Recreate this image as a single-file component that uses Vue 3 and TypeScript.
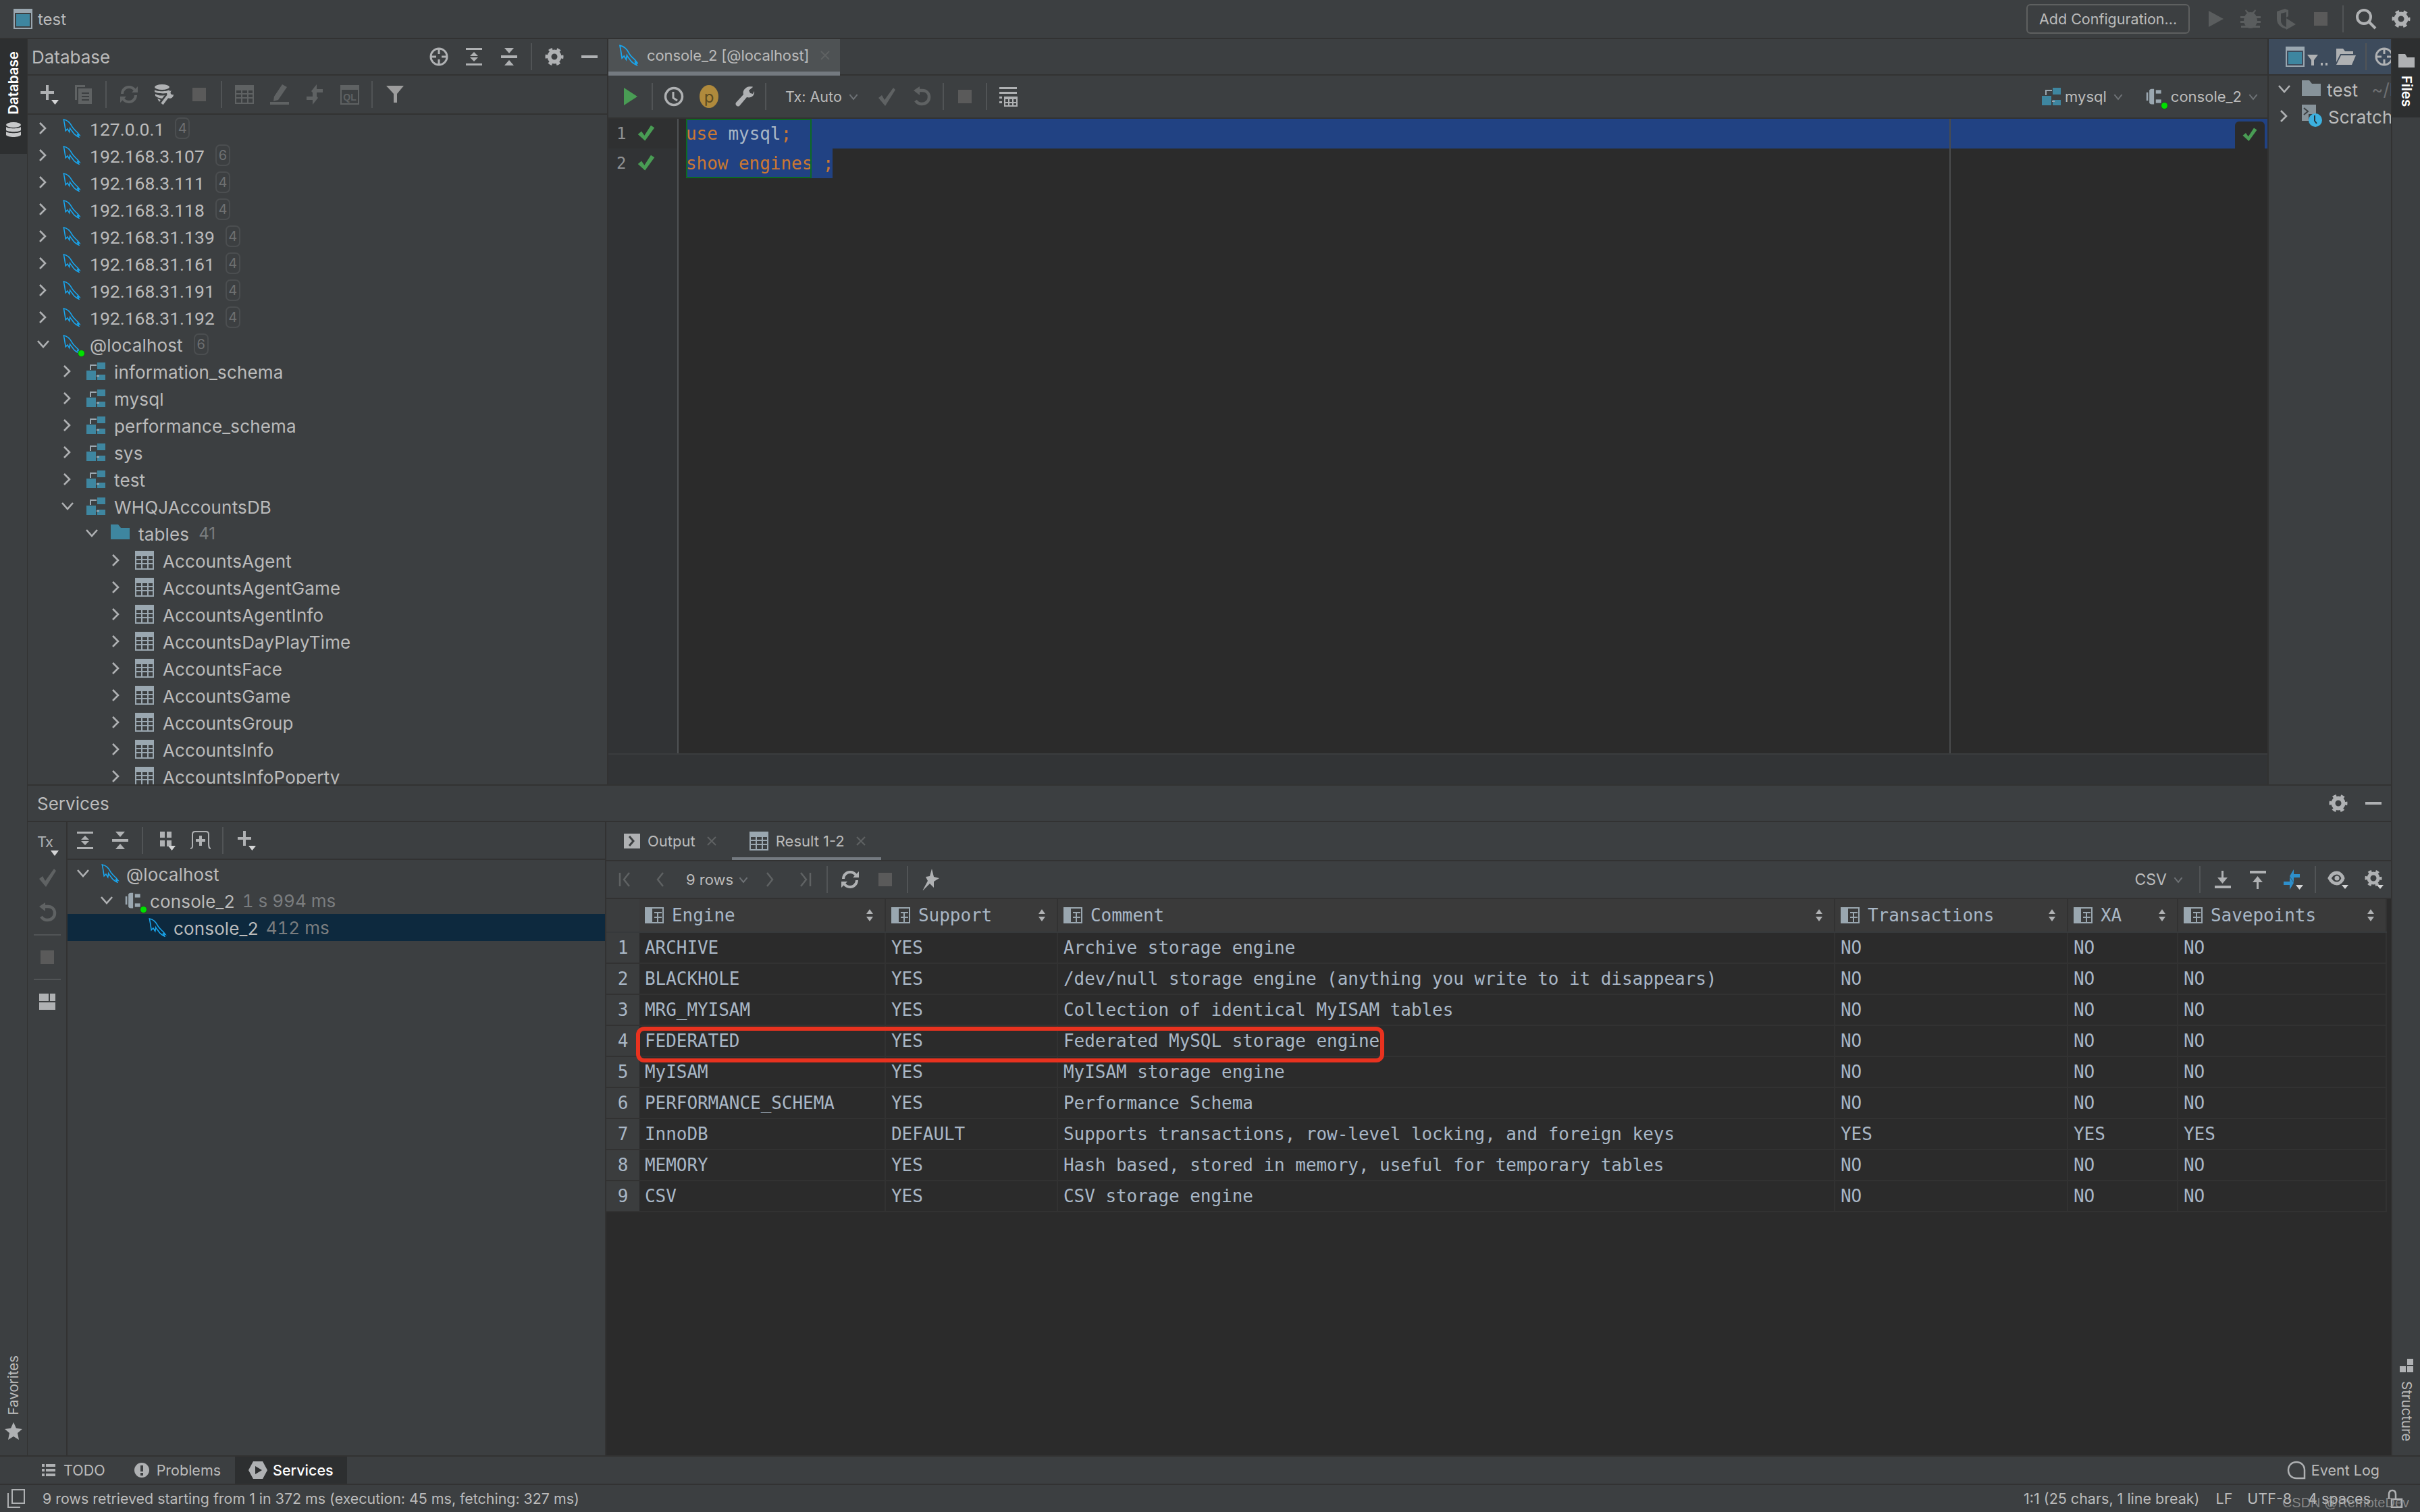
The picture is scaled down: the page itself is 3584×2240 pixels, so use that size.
<script setup lang="ts">
interface TreeRow { level: number; arrow: 'r' | 'd' | ''; icon: string; text: string; badge?: string; count?: string; live?: boolean }
const hosts = ['127.0.0.1|4', '192.168.3.107|6', '192.168.3.111|4', '192.168.3.118|4', '192.168.31.139|4', '192.168.31.161|4', '192.168.31.191|4', '192.168.31.192|4']
const dbRows: TreeRow[] = [
  ...hosts.map(h => ({ level: 0, arrow: 'r' as const, icon: 'dolphin', text: h.split('|')[0], badge: h.split('|')[1] })),
  { level: 0, arrow: 'd', icon: 'dolphin', text: '@localhost', badge: '6', live: true },
  ...['information_schema', 'mysql', 'performance_schema', 'sys', 'test'].map(t => ({ level: 1, arrow: 'r' as const, icon: 'schema', text: t })),
  { level: 1, arrow: 'd', icon: 'schema', text: 'WHQJAccountsDB' },
  { level: 2, arrow: 'd', icon: 'folder', text: 'tables', count: '41' },
  ...['AccountsAgent', 'AccountsAgentGame', 'AccountsAgentInfo', 'AccountsDayPlayTime', 'AccountsFace', 'AccountsGame', 'AccountsGroup', 'AccountsInfo', 'AccountsInfoPoperty'].map(t => ({ level: 3, arrow: 'r' as const, icon: 'table', text: t })),
]
const svcRows = [
  { level: 0, arrow: 'd', icon: 'dolphin', text: '@localhost', time: '', live: false, sel: false },
  { level: 1, arrow: 'd', icon: 'console', text: 'console_2', time: '1 s 994 ms', live: true, sel: false },
  { level: 2, arrow: '', icon: 'dolphin', text: 'console_2', time: '412 ms', live: false, sel: true },
]
const dbHeadTools = ['crosshair', 'expand', 'collapse', '|', 'gear', 'minimize']
const dbTools = ['plus', 'copy', '|', 'refreshOff', 'dbtool', 'stop', '|', 'tableOff', 'edit', 'compareOff', 'ql', '|', 'filter']
const runTools = ['runOff', 'bug', 'coverage', 'stop', '|', 'search', 'gear']
const svcTools = ['expand', 'collapse', '|', 'group', 'addTab', '|', 'plus']
const sideTools = ['tx', 'checkOff', 'undoOff', '|', 'stop', '|', 'layout']
const exportTools = ['|', 'download', 'upload', 'compareBlue', '|', 'eye', 'gearMenu']
const isAddress = (t: string) => /^\d/.test(t)

const columns = ['Engine', 'Support', 'Comment', 'Transactions', 'XA', 'Savepoints']
const engines = [
  ['ARCHIVE', 'YES', 'Archive storage engine', 'NO', 'NO', 'NO'],
  ['BLACKHOLE', 'YES', '/dev/null storage engine (anything you write to it disappears)', 'NO', 'NO', 'NO'],
  ['MRG_MYISAM', 'YES', 'Collection of identical MyISAM tables', 'NO', 'NO', 'NO'],
  ['FEDERATED', 'YES', 'Federated MySQL storage engine', 'NO', 'NO', 'NO'],
  ['MyISAM', 'YES', 'MyISAM storage engine', 'NO', 'NO', 'NO'],
  ['PERFORMANCE_SCHEMA', 'YES', 'Performance Schema', 'NO', 'NO', 'NO'],
  ['InnoDB', 'DEFAULT', 'Supports transactions, row-level locking, and foreign keys', 'YES', 'YES', 'YES'],
  ['MEMORY', 'YES', 'Hash based, stored in memory, useful for temporary tables', 'NO', 'NO', 'NO'],
  ['CSV', 'YES', 'CSV storage engine', 'NO', 'NO', 'NO'],
]
</script>

<template>
  <div class="ide">
    <svg class="defs" width="0" height="0">
      <symbol id="dolphin" viewBox="3 2 27 30"><path fill="none" stroke="#19a6ee" stroke-width="1.700" d="M4 3C10 4 14 8 17 14C19 18 23 21 26 24L29 28L26 27L28 31C24 29 21 27 19 24C17 21 15 19 14 17L13 23L10 18L7 21C6 14 5 8 4 3Z"/></symbol>
      <symbol id="schema" viewBox="0 0 28 28"><g fill="#3e86a0"><rect x="16" y="1" width="12" height="10"/><rect x="0" y="13" width="14" height="14"/><rect x="16" y="19" width="12" height="8"/></g><path fill="none" stroke="#9aa7b0" stroke-width="2" d="M6 12V5H15M15 21H19"/></symbol>
      <symbol id="folder" viewBox="0 0 28 28"><path fill="#3e86a0" d="M0 1H11L15 6H28V23H0Z"/></symbol>
      <symbol id="folderGray" viewBox="0 0 28 28"><path fill="#87939a" d="M0 1H11L15 6H28V24H0Z"/></symbol>
      <symbol id="table" viewBox="0 0 28 28"><rect x="0" y="0" width="28" height="28" fill="#9aa7b0"/><g fill="#3c3f41"><rect x="2" y="8" width="7" height="4"/><rect x="11" y="8" width="7" height="4"/><rect x="20" y="8" width="6" height="4"/><rect x="2" y="14" width="7" height="4"/><rect x="11" y="14" width="7" height="4"/><rect x="20" y="14" width="6" height="4"/><rect x="2" y="20" width="7" height="6"/><rect x="11" y="20" width="7" height="6"/><rect x="20" y="20" width="6" height="6"/></g></symbol>
      <symbol id="column" viewBox="0 0 28 28"><rect x="0" y="2" width="11" height="24" fill="#9aa7b0"/><path fill="none" stroke="#9aa7b0" stroke-width="2" d="M11 3H27V25H11M14 10H25M14 17H25M19 10V25"/></symbol>
      <symbol id="console" viewBox="0 0 32 32"><g fill="#9aa7b0"><path d="M2 9H5V23H2Z"/><path d="M7 6C7 4 9 3 11 3H15V29H11C9 29 7 28 7 26Z"/><rect x="18" y="5" width="9" height="6"/><rect x="18" y="21" width="9" height="6"/></g></symbol>
      <symbol id="crosshair" viewBox="0 0 32 32"><g fill="none" stroke="#afb1b3" stroke-width="3"><circle cx="16" cy="16" r="12"/><path d="M16 4V12M16 20V28M4 16H12M20 16H28"/></g></symbol>
      <symbol id="expand" viewBox="0 0 32 32"><g fill="#afb1b3"><rect x="4" y="3" width="24" height="3"/><rect x="4" y="26" width="24" height="3"/><path d="M16 9L22 15H10ZM16 23L10 17H22Z"/></g></symbol>
      <symbol id="collapse" viewBox="0 0 32 32"><g fill="#afb1b3"><rect x="4" y="14" width="24" height="4"/><path d="M9 3H23L16 11ZM16 21L23 29H9Z"/></g></symbol>
      <symbol id="gear" viewBox="0 0 32 32"><g fill="none" stroke="#afb1b3"><circle cx="16" cy="16" r="7.5" stroke-width="6"/><circle cx="16" cy="16" r="11.5" stroke-width="4" stroke-dasharray="5.5 6.54" stroke-dashoffset="2.7"/></g></symbol>
      <symbol id="gearMenu" viewBox="0 0 32 32"><g fill="none" stroke="#afb1b3"><circle cx="16" cy="14" r="7" stroke-width="5"/><circle cx="16" cy="14" r="10.5" stroke-width="4" stroke-dasharray="5 6" stroke-dashoffset="2.5"/></g><path fill="#d4d5d6" d="M21 24H31L26 30Z"/></symbol>
      <symbol id="minimize" viewBox="0 0 32 32"><rect x="4" y="14" width="24" height="4" fill="#afb1b3"/></symbol>
      <symbol id="plus" viewBox="0 0 32 32"><path fill="#afb1b3" d="M9 3H13V12H21V16H13V25H9V16H1V12H9Z" transform="translate(3 -1)"/><path fill="#d4d5d6" d="M20 24H31L25.500 31Z"/></symbol>
      <symbol id="copy" viewBox="0 0 32 32"><g fill="#5f6263"><path d="M3 2H18V5H6V24H3Z"/><path d="M8 7H28V30H8Z"/></g><g fill="#3c3f41"><rect x="13" y="13" width="11" height="2"/><rect x="13" y="18" width="11" height="2"/><rect x="13" y="23" width="11" height="2"/></g></symbol>
      <symbol id="refreshOff" viewBox="0 0 32 32"><g fill="none" stroke="#5f6263" stroke-width="4"><path d="M6 15C6 9 11 5 16 5C20 5 23 7 25 10"/><path d="M26 17C26 23 21 27 16 27C12 27 9 25 7 22"/></g><path fill="#5f6263" d="M29 4V13H20ZM3 28V19H12Z"/></symbol>
      <symbol id="refresh" viewBox="0 0 32 32"><g fill="none" stroke="#afb1b3" stroke-width="4"><path d="M6 15C6 9 11 5 16 5C20 5 23 7 25 10"/><path d="M26 17C26 23 21 27 16 27C12 27 9 25 7 22"/></g><path fill="#afb1b3" d="M29 4V13H20ZM3 28V19H12Z"/></symbol>
      <symbol id="dbtool" viewBox="0 0 32 32"><g fill="#afb1b3"><ellipse cx="13" cy="5" rx="11" ry="4"/><path d="M2 9C5 12 20 12 24 9V13C20 15 6 15 2 12ZM3 15C7 18 14 18 17 17L13 22C8 21 5 20 3 18ZM6 22L11 24L9 27Z"/></g><path fill="none" stroke="#afb1b3" stroke-width="4" d="M13 30L22 18"/><path fill="#afb1b3" d="M20 13L27 10C24 14 26 17 30 16C30 21 25 23 21 21Z"/></symbol>
      <symbol id="stop" viewBox="0 0 32 32"><rect x="6" y="6" width="20" height="20" fill="#5a5a5a"/></symbol>
      <symbol id="tableOff" viewBox="0 0 32 32"><rect x="2" y="2" width="28" height="28" fill="#5f6263"/><g fill="#3c3f41"><rect x="4" y="10" width="7" height="4"/><rect x="13" y="10" width="7" height="4"/><rect x="22" y="10" width="6" height="4"/><rect x="4" y="16" width="7" height="4"/><rect x="13" y="16" width="7" height="4"/><rect x="22" y="16" width="6" height="4"/><rect x="4" y="22" width="7" height="6"/><rect x="13" y="22" width="7" height="6"/><rect x="22" y="22" width="6" height="6"/></g></symbol>
      <symbol id="edit" viewBox="0 0 32 32"><g fill="#5f6263"><path d="M20 1L27 5L14 24L7 26L8 19Z"/><rect x="2" y="27" width="28" height="4"/></g></symbol>
      <symbol id="compareOff" viewBox="0 0 32 32"><g fill="#5f6263"><path d="M19 1V8H28V13H19V20L11 11ZM13 12L21 21L13 31V24H4V19H13Z"/></g></symbol>
      <symbol id="compareBlue" viewBox="0 0 32 32"><g fill="#2e8fcb"><path d="M17 1V8H26V13H17V20L11 11ZM11 12L17 21L11 31V24H2V19H11Z"/></g><path fill="#d4d5d6" d="M20 24H31L25.500 31Z"/></symbol>
      <symbol id="filter" viewBox="0 0 32 32"><path fill="#9d9d9d" d="M3 3H29L19 15V28H14V15Z"/></symbol>
      <symbol id="runOff" viewBox="0 0 32 32"><path fill="#5a5d5e" d="M6 4L28 16L6 28Z"/></symbol>
      <symbol id="run" viewBox="0 0 32 32"><path fill="#499c54" d="M6 3L26 16L6 29Z"/></symbol>
      <symbol id="bug" viewBox="0 0 32 32"><g fill="#5a5d5e"><ellipse cx="16" cy="18" rx="10" ry="12"/><path d="M9 2L14 7H18L23 2L24 4L20 9H12L8 4Z"/><rect x="1" y="12" width="30" height="3"/><rect x="1" y="19" width="30" height="3"/><rect x="2" y="26" width="28" height="3"/></g></symbol>
      <symbol id="coverage" viewBox="0 0 32 32"><path fill="#5a5d5e" d="M3 5L15 1L20 3V12L17 14V6L9 8V19C9 23 13 27 17 28V31C9 29 3 24 3 16Z"/><path fill="#5a5d5e" d="M17 15L31 24L17 32Z"/></symbol>
      <symbol id="search" viewBox="0 0 32 32"><g fill="none" stroke="#afb1b3" stroke-width="4"><circle cx="13" cy="13" r="10"/><path d="M20 20L30 30"/></g></symbol>
      <symbol id="clock" viewBox="0 0 32 32"><g fill="none" stroke="#afb1b3" stroke-width="3.500"><circle cx="16" cy="16" r="12.500"/><path d="M15 9V18L21 22" stroke-width="3"/></g></symbol>
      <symbol id="wrench" viewBox="0 0 32 32"><path fill="#afb1b3" d="M19 3C24 0 30 2 29 2L23 7L25 11L29 12L31 8C32 14 27 19 20 17L9 30C6 32 2 28 4 25L15 13C14 9 15 6 19 3Z"/></symbol>
      <symbol id="checkOff" viewBox="0 0 32 32"><path fill="#5f6263" d="M4 18L9 14L13 21L26 3L29 6L14 30Z"/></symbol>
      <symbol id="undoOff" viewBox="0 0 32 32"><path fill="none" stroke="#5f6263" stroke-width="4.500" d="M11 7H17C23 7 27 11 27 17C27 23 22 27 16 27C12 27 9 25 7 22"/><path fill="#5f6263" d="M4 7L13 1V14Z"/></symbol>
      <symbol id="tableMenu" viewBox="0 0 32 32"><g fill="#afb1b3"><rect x="3" y="2" width="26" height="3"/><rect x="3" y="9" width="26" height="3"/><rect x="3" y="16" width="4" height="3"/><rect x="3" y="23" width="4" height="3"/><path d="M10 16H30V31H10Z"/></g><g fill="#3c3f41"><rect x="12" y="20" width="4" height="4"/><rect x="18" y="20" width="4" height="4"/><rect x="24" y="20" width="4" height="4"/><rect x="12" y="26" width="4" height="3"/><rect x="18" y="26" width="4" height="3"/><rect x="24" y="26" width="4" height="3"/></g></symbol>
      <symbol id="greenCheck" viewBox="0 0 32 32"><path fill="#499c54" d="M2 17L8 12L13 19L24 2L30 6L14 28Z"/></symbol>
      <symbol id="group" viewBox="0 0 32 32"><g fill="#afb1b3"><rect x="8" y="3" width="7" height="9"/><rect x="18" y="3" width="7" height="9"/><rect x="8" y="16" width="7" height="9"/><rect x="18" y="16" width="7" height="9"/></g><path fill="#d4d5d6" d="M20 24H31L25.500 31Z"/></symbol>
      <symbol id="addTab" viewBox="0 0 32 32"><path fill="none" stroke="#afb1b3" stroke-width="2" d="M1 28C5 28 4 24 4 20V7C4 4 6 3 8 3H24C26 3 28 4 28 7V20C28 24 28 28 31 28"/><path fill="#afb1b3" d="M14 9H18V14H23V18H18V24H14V18H9V14H14Z"/></symbol>
      <symbol id="triangle" viewBox="0 0 12 8"><path fill="#d4d5d6" d="M0 0H12L6 8Z"/></symbol>
      <symbol id="layout" viewBox="0 0 32 32"><g fill="#afb1b3"><rect x="4" y="4" width="14" height="11"/><rect x="20" y="4" width="8" height="11"/><rect x="4" y="17" width="24" height="11"/></g></symbol>
      <symbol id="download" viewBox="0 0 32 32"><g fill="#afb1b3"><rect x="4" y="25" width="24" height="4"/><rect x="14" y="3" width="3" height="12"/><path d="M8 13H23L15.500 22Z"/></g></symbol>
      <symbol id="upload" viewBox="0 0 32 32"><g fill="#afb1b3"><rect x="4" y="3" width="24" height="4"/><rect x="14" y="18" width="3" height="12"/><path d="M8 20H23L15.500 11Z"/></g></symbol>
      <symbol id="eye" viewBox="0 0 32 32"><path fill="none" stroke="#afb1b3" stroke-width="5" d="M3 14C6 8 10 6 14 6C18 6 22 10 23 14C22 18 18 22 14 22C10 22 6 20 3 14Z"/><circle cx="14" cy="14" r="3.500" fill="#afb1b3"/><path fill="#d4d5d6" d="M21 24H31L26 30Z"/></symbol>
      <symbol id="first" viewBox="0 0 32 32"><path fill="none" stroke="#5f6263" stroke-width="2.500" d="M8 6V26M22 6L14 16L22 26"/></symbol>
      <symbol id="prev" viewBox="0 0 32 32"><path fill="none" stroke="#5f6263" stroke-width="2.500" d="M20 6L12 16L20 26"/></symbol>
      <symbol id="next" viewBox="0 0 32 32"><path fill="none" stroke="#5f6263" stroke-width="2.500" d="M12 6L20 16L12 26"/></symbol>
      <symbol id="last" viewBox="0 0 32 32"><path fill="none" stroke="#5f6263" stroke-width="2.500" d="M24 6V26M10 6L18 16L10 26"/></symbol>
      <symbol id="pin" viewBox="0 0 32 32"><path fill="#afb1b3" d="M20 1L23 13L31 15L23 20L23 29L17 23L6 34L14 19L11 13L17 12Z" transform="translate(-2 -1)"/></symbol>
      <symbol id="output" viewBox="0 0 24 32"><rect x="0" y="5" width="24" height="22" fill="#afb1b3"/><path fill="none" stroke="#3c3f41" stroke-width="3" d="M8 9L14 16L8 23"/></symbol>
      <symbol id="close" viewBox="0 0 16 16"><path fill="none" stroke="#5f6263" stroke-width="2" d="M2 2L14 14M14 2L2 14"/></symbol>
      <symbol id="sort" viewBox="0 0 12 18"><path fill="#afb1b3" d="M6 0L11 7H1ZM6 18L1 11H11Z"/></symbol>
      <symbol id="chevR" viewBox="0 0 32 32"><path fill="none" stroke="#afb1b3" stroke-width="2.600" d="M11 8L19 16L11 24"/></symbol>
      <symbol id="chevD" viewBox="0 0 32 32"><path fill="none" stroke="#afb1b3" stroke-width="2.600" d="M8 11L16 20L24 11"/></symbol>
      <symbol id="chevS" viewBox="0 0 32 32"><path fill="none" stroke="#6d7175" stroke-width="3.500" d="M6 11L16 23L26 11"/></symbol>
      <symbol id="frame" viewBox="0 0 28 32"><rect x="1" y="2" width="26" height="28" fill="none" stroke="#9aa7b0" stroke-width="2"/><rect x="1" y="2" width="26" height="5" fill="#9aa7b0"/><rect x="4" y="9" width="20" height="18" fill="#3e86a0"/></symbol>
      <symbol id="starFav" viewBox="0 0 26 26"><path fill="#afb1b3" d="M13 0L17 9L26 10L19 16L21 26L13 21L5 26L7 16L0 10L9 9Z"/></symbol>
      <symbol id="dbStack" viewBox="0 0 24 24"><g fill="#c8c9ca"><ellipse cx="12" cy="5" rx="11" ry="4"/><path d="M1 8C4 11 20 11 23 8V13C20 16 4 16 1 13ZM1 15C4 18 20 18 23 15V20C20 24 4 24 1 20Z"/></g></symbol>
      <symbol id="filesIc" viewBox="0 0 24 20"><path fill="#afb1b3" d="M0 0H10L13 5H24V20H0Z"/></symbol>
      <symbol id="structIc" viewBox="0 0 20 20"><g fill="#afb1b3"><rect x="11" y="0" width="9" height="9"/><rect x="0" y="11" width="9" height="9"/><rect x="11" y="11" width="9" height="9"/></g></symbol>
      <symbol id="todo" viewBox="0 0 24 24"><g fill="#afb1b3"><rect x="2" y="3" width="4" height="4"/><rect x="8" y="3" width="14" height="4"/><rect x="2" y="10" width="4" height="4"/><rect x="8" y="10" width="14" height="4"/><rect x="2" y="17" width="4" height="4"/><rect x="8" y="17" width="14" height="4"/></g></symbol>
      <symbol id="problems" viewBox="0 0 24 24"><circle cx="12" cy="12" r="11" fill="#afb1b3"/><rect x="10" y="5" width="4" height="9" fill="#3c3f41"/><rect x="10" y="16" width="4" height="4" fill="#3c3f41"/></symbol>
      <symbol id="services" viewBox="0 0 28 28"><path fill="#afb1b3" d="M7 1H21L28 14L21 27H7L0 14Z"/><path fill="#2d2f30" d="M10 8L20 14L10 20Z"/></symbol>
      <symbol id="eventLog" viewBox="0 0 28 28"><path fill="none" stroke="#afb1b3" stroke-width="2.500" d="M14 2C7 2 2 7 2 14C2 21 7 26 14 26H26V14C26 7 21 2 14 2Z"/></symbol>
      <symbol id="panels" viewBox="0 0 26 28"><path fill="none" stroke="#afb1b3" stroke-width="2" d="M7 1H25V21H7ZM1 6V27H19"/></symbol>
      <symbol id="lock" viewBox="0 0 28 28"><path fill="none" stroke="#afb1b3" stroke-width="2.500" d="M5 15V8C5 4 7 2 10 2C13 2 15 4 15 8V15"/><rect x="9" y="15" width="15" height="12" fill="none" stroke="#afb1b3" stroke-width="2.500"/></symbol>
      <symbol id="scratch" viewBox="0 0 30 34"><path fill="#87939a" d="M0 0H21V14H10V24H0Z"/><path fill="none" stroke="#3c3f41" stroke-width="2" d="M3 5L9 10L3 15"/><circle cx="20" cy="23" r="10" fill="#3cb1e0"/><path fill="none" stroke="#26343d" stroke-width="2" d="M19 16V24L22 28"/></symbol>
      <symbol id="filterDots" viewBox="0 0 30 20"><path fill="#afb1b3" d="M0 2H16L10 10V18H6V10Z"/><rect x="20" y="14" width="3" height="4" fill="#afb1b3"/><rect x="27" y="14" width="3" height="4" fill="#afb1b3"/></symbol>
      <symbol id="folderOpen" viewBox="0 0 30 28"><path fill="#afb1b3" d="M1 2H11L14 6H26V10H7L1 22ZM8 12H30L24 26H1Z"/></symbol>
    </svg>

    <header class="topbar">
      <svg class="title-ic"><use href="#frame" /></svg>
      <span class="title">test</span>
      <button class="add-config">Add Configuration...</button>
      <template v-for="(t, i) in runTools" :key="i">
        <i v-if="t === '|'" class="sep" />
        <span v-else class="b"><svg class="i"><use :href="'#' + t" /></svg></span>
      </template>
    </header>

    <div class="main">
      <aside class="stripe left">
        <div class="stripe-btn active">
          <span class="vtext up bold">Database</span>
          <svg class="db-ic"><use href="#dbStack" /></svg>
        </div>
        <div class="stripe-btn fav">
          <span class="vtext up">Favorites</span>
          <svg class="star-ic"><use href="#starFav" /></svg>
        </div>
      </aside>

      <div class="center">
        <div class="upper">
          <section class="db">
            <div class="head">
              <span class="head-title">Database</span>
              <span class="push" />
              <template v-for="(t, i) in dbHeadTools" :key="i">
                <i v-if="t === '|'" class="sep" />
                <span v-else class="b"><svg class="i"><use :href="'#' + t" /></svg></span>
              </template>
            </div>
            <div class="tools db-tools">
              <template v-for="(t, i) in dbTools" :key="i">
                <i v-if="t === '|'" class="sep" />
                <span v-else-if="t === 'ql'" class="b">
                  <svg class="i" viewBox="0 0 32 32"><path fill="none" stroke="#5f6263" stroke-width="2" d="M3 3H29V30H3Z" /><rect x="3" y="3" width="26" height="6" fill="#5f6263" /><text x="16" y="25" text-anchor="middle" font-family="Liberation Sans" font-weight="700" font-size="14" fill="#5f6263">QL</text></svg>
                </span>
                <span v-else class="b"><svg class="i"><use :href="'#' + t" /></svg></span>
              </template>
            </div>
            <div class="tree">
              <div v-for="r in dbRows" :key="r.text + r.level" class="row" :style="{ paddingLeft: 7 + r.level * 36 + 'px' }">
                <svg class="chev"><use :href="r.arrow === 'd' ? '#chevD' : '#chevR'" /></svg>
                <span class="ti-wrap">
                  <svg class="ti"><use :href="'#' + r.icon" /></svg>
                  <i v-if="r.live" class="dot" />
                </span>
                <span class="label" :class="{ address: isAddress(r.text) }">{{ r.text }}</span>
                <span v-if="r.badge" class="badge">{{ r.badge }}</span>
                <span v-if="r.count" class="count">{{ r.count }}</span>
              </div>
            </div>
          </section>

          <section class="editor">
            <div class="tabbar">
              <div class="tab">
                <svg class="tab-ic"><use href="#dolphin" /></svg>
                <span class="tab-label">console_2 [@localhost]</span>
                <svg class="x"><use href="#close" /></svg>
              </div>
            </div>
            <div class="tools ed-tools">
              <span class="b"><svg class="i"><use href="#run" /></svg></span>
              <i class="sep s12" />
              <span class="b"><svg class="i"><use href="#clock" /></svg></span>
              <span class="b"><span class="p-ic">p</span></span>
              <span class="b"><svg class="i"><use href="#wrench" /></svg></span>
              <i class="sep s12" />
              <span class="tx">Tx: Auto</span>
              <svg class="sm-chev tx-chev"><use href="#chevS" /></svg>
              <span class="b"><svg class="i"><use href="#checkOff" /></svg></span>
              <span class="b"><svg class="i"><use href="#undoOff" /></svg></span>
              <i class="sep s12" />
              <span class="b"><svg class="i"><use href="#stop" /></svg></span>
              <i class="sep s12" />
              <span class="b"><svg class="i"><use href="#tableMenu" /></svg></span>
              <span class="push" />
              <svg class="ti"><use href="#schema" /></svg>
              <span class="ctx">mysql</span>
              <svg class="sm-chev"><use href="#chevS" /></svg>
              <span class="ti-wrap ctx-c">
                <svg class="ti"><use href="#console" /></svg>
                <i class="dot" />
              </span>
              <span class="ctx">console_2</span>
              <svg class="sm-chev last"><use href="#chevS" /></svg>
            </div>
            <div class="code-area">
              <div class="gutter">
                <div class="gline cur"><span class="ln">1</span><svg class="gcheck"><use href="#greenCheck" /></svg></div>
                <div class="gline"><span class="ln">2</span><svg class="gcheck"><use href="#greenCheck" /></svg></div>
              </div>
              <div class="code">
                <div class="line sel-full"><span class="kw">use</span> <span class="id">mysql</span><span class="kw">;</span></div>
                <div class="line sel-part"><span class="kw">show engines ;</span></div>
                <i class="stmt-box" />
                <i class="margin-line" />
                <span class="status-check"><svg class="sc"><use href="#greenCheck" /></svg></span>
              </div>
            </div>
            <div class="ed-foot" />
          </section>

          <section class="project">
            <div class="proj-head">
              <svg class="proj-frame"><use href="#frame" /></svg>
              <svg class="proj-dots"><use href="#filterDots" /></svg>
              <svg class="proj-open"><use href="#folderOpen" /></svg>
              <i class="sep proj-sep" />
              <svg class="i"><use href="#crosshair" /></svg>
            </div>
            <div class="proj-row">
              <svg class="proj-chev"><use href="#chevD" /></svg>
              <svg class="ti"><use href="#folderGray" /></svg>
              <span class="label proj-label">test</span>
              <span class="path">~/l</span>
            </div>
            <div class="proj-row">
              <svg class="proj-chev"><use href="#chevR" /></svg>
              <svg class="ti scr"><use href="#scratch" /></svg>
              <span class="label proj-label">Scratch</span>
            </div>
          </section>
        </div>

        <section class="services">
          <div class="head">
            <span class="head-title svc">Services</span>
            <span class="push" />
            <span class="b"><svg class="i"><use href="#gear" /></svg></span>
            <span class="b"><svg class="i"><use href="#minimize" /></svg></span>
          </div>
          <div class="svc-body">
            <div class="side-tools">
              <template v-for="(t, i) in sideTools" :key="i">
                <i v-if="t === '|'" class="hsep" />
                <span v-else-if="t === 'tx'" class="b tall tx-btn">
                  <span class="tx-label">Tx</span>
                  <svg class="tri"><use href="#triangle" /></svg>
                </span>
                <span v-else class="b tall"><svg class="i"><use :href="'#' + t" /></svg></span>
              </template>
            </div>
            <div class="svc-tree">
              <div class="tools svc-tools">
                <template v-for="(t, i) in svcTools" :key="i">
                  <i v-if="t === '|'" class="sep" />
                  <span v-else class="b"><svg class="i"><use :href="'#' + t" /></svg></span>
                </template>
              </div>
              <div v-for="(r, i) in svcRows" :key="i" class="row svc-row" :class="{ selected: r.sel }" :style="{ paddingLeft: 7 + r.level * 35 + 'px' }">
                <svg class="chev" :class="{ hidden: !r.arrow }"><use href="#chevD" /></svg>
                <span class="ti-wrap">
                  <svg class="ti"><use :href="'#' + r.icon" /></svg>
                  <i v-if="r.live" class="dot" />
                </span>
                <span class="label">{{ r.text }}</span>
                <span v-if="r.time" class="time">{{ r.time }}</span>
              </div>
            </div>
            <div class="result">
              <div class="rtabs">
                <div class="rtab">
                  <svg class="out-ic"><use href="#output" /></svg>
                  <span class="rtab-label">Output</span>
                  <svg class="x"><use href="#close" /></svg>
                </div>
                <div class="rtab on">
                  <svg class="ti"><use href="#table" /></svg>
                  <span class="rtab-label">Result 1-2</span>
                  <svg class="x"><use href="#close" /></svg>
                </div>
              </div>
              <div class="tools res-tools">
                <span class="b"><svg class="i"><use href="#first" /></svg></span>
                <span class="b"><svg class="i"><use href="#prev" /></svg></span>
                <span class="rows-count">9 rows</span>
                <svg class="sm-chev rc"><use href="#chevS" /></svg>
                <span class="b"><svg class="i"><use href="#next" /></svg></span>
                <span class="b"><svg class="i"><use href="#last" /></svg></span>
                <i class="sep" />
                <span class="b"><svg class="i"><use href="#refresh" /></svg></span>
                <span class="b"><svg class="i"><use href="#stop" /></svg></span>
                <i class="sep" />
                <span class="b"><svg class="i"><use href="#pin" /></svg></span>
                <span class="push" />
                <span class="csv">CSV</span>
                <svg class="sm-chev csvc"><use href="#chevS" /></svg>
                <template v-for="(t, i) in exportTools" :key="i">
                  <i v-if="t === '|'" class="sep" />
                  <span v-else class="b"><svg class="i"><use :href="'#' + t" /></svg></span>
                </template>
              </div>
              <div class="grid-wrap">
                <div class="grid-row grid-head">
                  <div class="rn" />
                  <div v-for="c in columns" :key="c" class="hcell">
                    <svg class="col-ic"><use href="#column" /></svg>
                    <span class="hlabel">{{ c }}</span>
                    <svg class="sort"><use href="#sort" /></svg>
                  </div>
                </div>
                <div v-for="(e, i) in engines" :key="e[0]" class="grid-row">
                  <div class="rn num">{{ i + 1 }}</div>
                  <div v-for="(v, j) in e" :key="j" class="cell">{{ v }}</div>
                </div>
                <i class="annotation" />
              </div>
            </div>
          </div>
        </section>
      </div>

      <aside class="stripe right">
        <div class="stripe-btn active files">
          <svg class="files-ic"><use href="#filesIc" /></svg>
          <span class="vtext bold">Files</span>
        </div>
        <div class="stripe-btn struct">
          <svg class="struct-ic"><use href="#structIc" /></svg>
          <span class="vtext">Structure</span>
        </div>
      </aside>
    </div>

    <div class="toolbar-bottom">
      <div class="tw first"><svg class="tw-ic"><use href="#todo" /></svg>TODO</div>
      <div class="tw"><svg class="tw-ic"><use href="#problems" /></svg>Problems</div>
      <div class="tw active"><svg class="tw-ic big"><use href="#services" /></svg>Services</div>
      <span class="push" />
      <div class="tw elog"><svg class="tw-ic big"><use href="#eventLog" /></svg>Event Log</div>
    </div>

    <footer class="status">
      <svg class="panels"><use href="#panels" /></svg>
      <span class="msg">9 rows retrieved starting from 1 in 372 ms (execution: 45 ms, fetching: 327 ms)</span>
      <span class="push" />
      <span class="st s1">1:1 (25 chars, 1 line break)</span>
      <span class="st s2">LF</span>
      <span class="st s3">UTF-8</span>
      <span class="st s4">4 spaces</span>
      <svg class="lock"><use href="#lock" /></svg>
      <span class="watermark">CSDN @RemoteDev</span>
    </footer>
  </div>
</template>

<style scoped>
.ide {
  position: relative;
  width: 3584px;
  height: 2240px;
  overflow: hidden;
  background: #3c3f41;
  color: #bbbbbb;
  font-family: Inter, "Liberation Sans", sans-serif;
  font-size: 26px;
  display: flex;
  flex-direction: column;
}
.defs { position: absolute; }
svg { display: block; flex: none; }
.push { flex: 1; }
.b { width: 52px; height: 52px; flex: none; display: flex; align-items: center; justify-content: center; }
.i { width: 32px; height: 32px; }
.sep { width: 15px; height: 40px; flex: none; display: block; position: relative; }
.sep::before { content: ""; position: absolute; left: 6px; top: 0; bottom: 0; width: 2px; background: #515456; }
.s12 { width: 12px; }
.s12::before { left: 5px; }

.topbar { height: 56px; flex: none; display: flex; align-items: center; padding: 0 2px 0 20px; border-bottom: 2px solid #323232; box-sizing: content-box; }
.title-ic { width: 28px; height: 32px; }
.title { margin-left: 8px; font-size: 24px; flex: 1; }
.add-config { width: 242px; height: 44px; margin-right: 12px; background: transparent; border: 2px solid #5e6060; border-radius: 6px; color: #bbbbbb; font: inherit; font-size: 21.5px; padding: 0; }

.main { height: 2098px; flex: none; display: flex; border-bottom: 2px solid #323232; }
.stripe { width: 40px; flex: none; display: flex; flex-direction: column; justify-content: space-between; }
.stripe.left { border-right: 1px solid #323232; }
.stripe.right { width: 41px; }
.stripe-btn { display: flex; flex-direction: column; align-items: center; }
.stripe-btn.active { background: #2d2f30; color: #ffffff; }
.left .stripe-btn.active { height: 170px; padding-top: 18px; box-sizing: border-box; }
.vtext { writing-mode: vertical-rl; font-size: 20.5px; line-height: 1; white-space: nowrap; }
.vtext.up { transform: rotate(180deg); }
.vtext.bold { font-weight: 600; }
.db-ic { width: 24px; height: 24px; margin-top: 10px; }
.fav { padding-bottom: 23px; }
.star-ic { width: 26px; height: 26px; margin-top: 10px; }
.files { height: 116px; padding-top: 22px; box-sizing: border-box; }
.files-ic { width: 24px; height: 20px; margin-bottom: 12px; }
.struct { padding-bottom: 20px; }
.struct-ic { width: 20px; height: 20px; margin-bottom: 13px; }

.center { flex: 1; min-width: 0; display: flex; flex-direction: column; border-right: 2px solid #323232; }
.upper { height: 1104px; flex: none; display: flex; border-bottom: 2px solid #323232; }

.db { width: 858px; flex: none; border-right: 2px solid #323232; display: flex; flex-direction: column; overflow: hidden; }
.head { height: 52px; flex: none; display: flex; align-items: center; border-bottom: 2px solid #323232; }
.head-title { margin-left: 6px; font-size: 26px; }
.head-title.svc { margin-left: 14px; }
.tools { flex: none; display: flex; align-items: center; border-bottom: 2px solid #323232; }
.db-tools { height: 56px; padding-left: 5px; }
.tree { flex: 1; overflow: hidden; }
.row { height: 40px; display: flex; align-items: center; white-space: nowrap; }
.chev { width: 32px; height: 32px; }
.chev.hidden { visibility: hidden; }
.ti-wrap { position: relative; margin: 0 13px 0 12px; flex: none; }
.ti { width: 28px; height: 28px; }
.dot { position: absolute; right: -5px; bottom: -4px; width: 9px; height: 9px; border-radius: 50%; background: #00e000; box-shadow: 0 0 0 1px #2a4a2a; }
.label { font-size: 26px; color: #bbbbbb; letter-spacing: 0.15px; position: relative; top: 1px; }
.label.address { font-family: Roboto, "Liberation Sans", sans-serif; font-size: 26.5px; letter-spacing: 0; }
.badge { margin-left: 16px; width: 22px; height: 32px; box-sizing: border-box; border: 2px solid #4b4e50; border-radius: 7px; color: #6e7072; font-size: 20px; display: flex; align-items: center; justify-content: center; }
.count { margin-left: 14px; color: #7a7d7f; font-size: 24px; }

.editor { width: 2457px; flex: none; display: flex; flex-direction: column; border-right: 2px solid #323232; }
.tabbar { height: 52px; flex: none; border-bottom: 2px solid #323232; position: relative; }
.tab { position: absolute; left: 0; top: 0; width: 343px; height: 54px; box-sizing: border-box; background: #4e5254; border-bottom: 6px solid #747a80; display: flex; align-items: center; padding-left: 16px; }
.tab-ic { width: 28px; height: 32px; }
.tab-label { margin-left: 13px; font-size: 22px; letter-spacing: -0.1px; }
.x { width: 16px; height: 16px; margin-left: 16px; }
.ed-tools { height: 62px; padding-left: 7px; }
.p-ic { width: 28px; height: 34px; border-radius: 50%; background: #b08a3c; color: #5c4a22; font-size: 24px; display: flex; align-items: center; justify-content: center; }
.tx { margin-left: 23px; font-size: 21.5px; }
.sm-chev { width: 18px; height: 18px; margin-left: 8px; }
.sm-chev.tx-chev { margin-right: 14px; }
.ctx { margin-left: 6px; font-size: 22px; }
.ctx-c { margin: 0 4px 0 31px; }
.sm-chev.last { margin-right: 12px; }
.code-area { height: 940px; flex: none; display: flex; }
.gutter { width: 102px; flex: none; background: #313335; border-right: 2px solid #4f5254; }
.gline { height: 44px; display: flex; align-items: center; padding-left: 12px; }
.gline.cur { background: #2f3031; }
.ln { color: #8f9193; font-family: "DejaVu Sans Mono", monospace; font-size: 24px; width: 26px; }
.gcheck { width: 28px; height: 30px; margin-left: 4px; }
.code { flex: 1; position: relative; background: #2b2b2b; font-family: "DejaVu Sans Mono", "Liberation Mono", monospace; font-size: 26px; letter-spacing: -0.05px; white-space: pre; }
.line { height: 44px; line-height: 44px; margin-left: 11px; }
.sel-full { background: #214283; }
.sel-part { background: #214283; width: 217px; }
.kw { color: #cc7832; }
.id { color: #a9b7c6; }
.stmt-box { position: absolute; left: 11px; top: 0; width: 186px; height: 88px; box-sizing: border-box; border: 2px solid #0d6b22; }
.margin-line { position: absolute; left: 1882px; top: 0; bottom: 0; width: 2px; background: #4a4c4d; }
.status-check { position: absolute; right: 4px; top: 4px; width: 44px; height: 40px; background: #2b2b2b; border-radius: 6px 6px 0 0; display: flex; align-items: center; justify-content: center; }
.sc { width: 24px; height: 24px; }
.ed-foot { flex: 1; background: #323436; border-top: 2px solid #3a3c3e; }

.project { flex: 1; min-width: 0; overflow: hidden; }
.proj-head { height: 52px; background: #3d4b5c; border-bottom: 2px solid #323232; display: flex; align-items: center; padding-left: 25px; }
.proj-frame { width: 28px; height: 32px; }
.proj-dots { width: 30px; height: 20px; margin: 10px 0 0 4px; }
.proj-open { width: 30px; height: 28px; margin-left: 12px; }
.proj-sep { margin-left: 8px; margin-right: 3px; }
.proj-row { height: 40px; display: flex; align-items: center; white-space: nowrap; position: relative; top: 0; }
.proj-chev { width: 32px; height: 32px; margin-left: 7px; }
.proj-row .ti { margin-left: 10px; }
.proj-row .scr { height: 34px; width: 30px; }
.proj-label { margin-left: 9px; }
.path { margin-left: 20px; color: #6e7072; }

.services { flex: 1; min-height: 0; display: flex; flex-direction: column; }
.svc-body { flex: 1; min-height: 0; display: flex; }
.side-tools { width: 57px; flex: none; border-right: 2px solid #323232; padding-top: 4px; display: flex; flex-direction: column; align-items: center; }
.b.tall { width: 100%; }
.tx-btn { position: relative; }
.tx-label { font-size: 22px; color: #afb1b3; letter-spacing: -1px; position: relative; left: -3px; top: -1px; }
.tri { position: absolute; left: 34px; bottom: 6px; width: 12px; height: 8px; }
.hsep { width: 40px; height: 14px; flex: none; position: relative; display: block; }
.hsep::before { content: ""; position: absolute; left: 0; right: 0; top: 6px; height: 2px; background: #515456; }
.svc-tree { width: 796px; flex: none; border-right: 2px solid #323232; }
.svc-tools { height: 54px; }
.svc-row .ti-wrap { margin: 0 10px; }
.svc-row .ti { width: 28px; height: 28px; }
.selected { background: #0d293e; }
.time { margin-left: 11px; color: #7a7d7f; font-size: 26px; font-variant-numeric: tabular-nums; }
.result { flex: 1; min-width: 0; display: flex; flex-direction: column; }
.rtabs { height: 56px; box-sizing: content-box; flex: none; display: flex; border-bottom: 2px solid #323232; }
.rtab { height: 56px; box-sizing: border-box; display: flex; align-items: center; padding-left: 26px; padding-right: 22px; }
.rtab.on { border-bottom: 4px solid #747a80; padding-top: 4px; padding-left: 26px; }
.out-ic { width: 24px; height: 32px; }
.rtab-label { margin-left: 11px; font-size: 22px; }
.rtab .x { margin-left: 16px; }
.res-tools { height: 54px; padding-left: 2px; }
.rows-count { margin-left: 12px; font-size: 22px; }
.sm-chev.rc { margin: 0 4px 0 6px; }
.csv { font-size: 23px; }
.sm-chev.csvc { margin: 0 16px 0 8px; }
.grid-wrap { flex: 1; min-height: 0; background: #2b2b2b; position: relative; }
.grid-row { display: grid; grid-template-columns: 49px 365px 255px 1151px 345px 163px 309px; width: 2637px; height: 46px; box-sizing: border-box; border-bottom: 2px solid #323232; font-family: "DejaVu Sans Mono", "Liberation Mono", monospace; font-size: 26px; letter-spacing: -0.05px; color: #a9b7c6; }
.grid-head { height: 50px; background: #3a3a3a; border-bottom: 2px solid #36393b; }
.rn { background: #3b3d3e; }
.num { text-align: center; line-height: 44px; color: #a9b7c6; }
.hcell, .cell { border-right: 2px solid #323232; white-space: nowrap; overflow: hidden; }
.hcell { display: flex; align-items: center; padding-left: 8px; padding-right: 16px; }
.cell { padding-left: 8px; line-height: 44px; }
.col-ic { width: 28px; height: 28px; }
.hlabel { margin-left: 12px; flex: 1; }
.sort { width: 12px; height: 18px; }
.annotation { position: absolute; left: 44px; top: 189px; width: 1108px; height: 53px; box-sizing: border-box; border: 6px solid #e8321f; border-radius: 12px; }

.toolbar-bottom { height: 40px; flex: none; display: flex; align-items: stretch; border-bottom: 2px solid #323232; box-sizing: content-box; }
.tw { display: flex; align-items: center; font-size: 21.5px; color: #bbbbbb; padding: 0 21px; }
.tw.first { padding-left: 60px; }
.tw.active { background: #2d2f30; color: #ffffff; padding: 0 20px; font-weight: 500; }
.tw-ic { width: 24px; height: 24px; margin-right: 10px; }
.tw-ic.big { width: 28px; height: 28px; margin-right: 8px; }
.elog { padding-right: 60px; }

.status { height: 40px; flex: none; display: flex; align-items: center; position: relative; }
.panels { width: 26px; height: 28px; margin-left: 11px; }
.msg { margin-left: 26px; font-size: 21.4px; }
.st { font-size: 21.5px; }
.s2 { margin-left: 24px; }
.s3 { margin-left: 22px; }
.s4 { margin-left: 24px; }
.lock { width: 28px; height: 28px; margin: 0 23px 0 22px; }
.watermark { position: absolute; right: 16px; bottom: 2px; font-size: 20px; color: #a0a0a0; opacity: 0.75; font-family: "Liberation Sans", sans-serif; }
</style>
